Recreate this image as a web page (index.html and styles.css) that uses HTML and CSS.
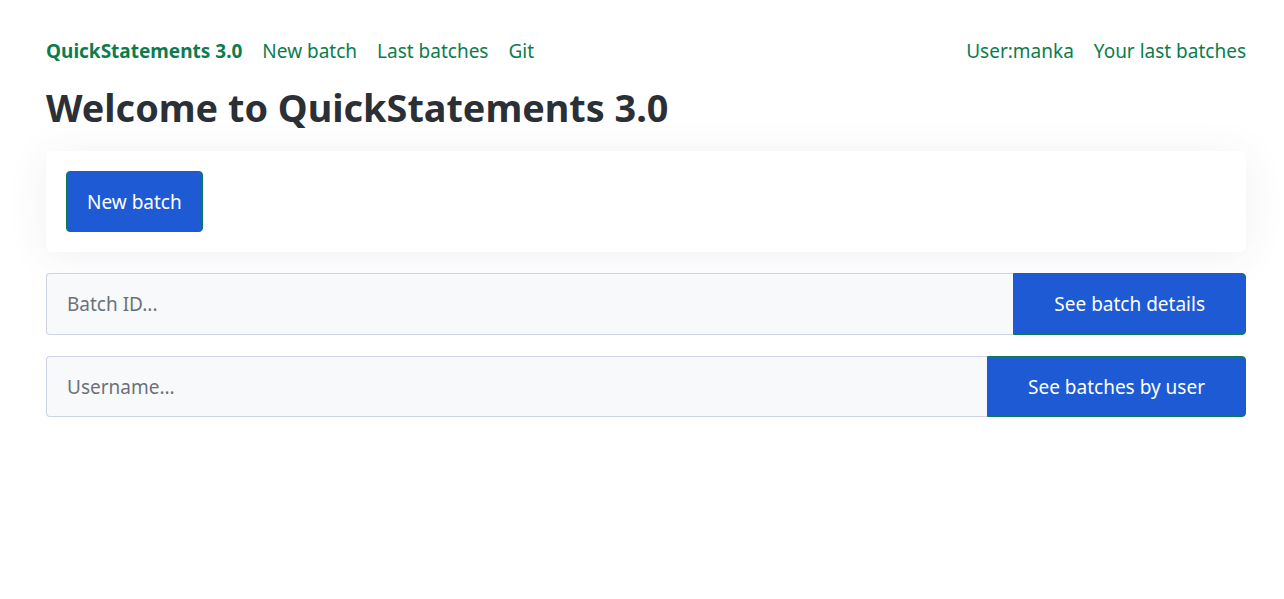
FILE: index.html
```html
<!DOCTYPE html>
<html lang="en">
<head>
<meta charset="utf-8">
<title>QuickStatements 3.0</title>
<link rel="stylesheet" href="styles.css">
</head>
<body>
<div class="page">
  <nav class="nav">
    <div class="nav-left">
      <a class="brand" href="#">QuickStatements 3.0</a>
      <a class="nav-link" href="#">New batch</a>
      <a class="nav-link" href="#">Last batches</a>
      <a class="nav-link" href="#">Git</a>
    </div>
    <div class="nav-right">
      <a class="nav-link" href="#">User:manka</a>
      <a class="nav-link" href="#">Your last batches</a>
    </div>
  </nav>
  <h1 class="title">Welcome to QuickStatements 3.0</h1>
  <div class="card">
    <button class="btn btn-new">New batch</button>
  </div>
  <div class="input-group">
    <input class="field" type="text" placeholder="Batch ID...">
    <button class="btn btn-side">See batch details</button>
  </div>
  <div class="input-group">
    <input class="field" type="text" placeholder="Username...">
    <button class="btn btn-side">See batches by user</button>
  </div>
</div>
</body>
</html>
```

FILE: styles.css
```css
* { box-sizing: border-box; }
html, body { margin: 0; padding: 0; background: #fff; }
body {
  font-family: "Noto Sans", "Open Sans", sans-serif;
  font-size: 19px;
  color: #2b2f36;
}
.page {
  padding: 36px 38px 0 46px;
}
.nav {
  display: flex;
  justify-content: space-between;
  align-items: center;
  height: 30px;
}
.nav-left, .nav-right {
  display: flex;
  align-items: center;
  gap: 20px;
}
.nav a { text-decoration: none; color: #0b7c4e; }
.brand { font-weight: 700; }
.title {
  margin: 15px 0 0;
  font-size: 37.8px;
  font-weight: 700;
  line-height: 54px;
  color: #2b2f36;
}
.card {
  margin-top: 16px;
  background: #fff;
  border-radius: 6px;
  padding: 20px;
  box-shadow: 0 4px 40px rgba(60, 70, 120, 0.08);
  height: 101px;
}
.btn {
  font: inherit;
  color: #fff;
  background: #1e5ad3;
  border: 1px solid #0b7c4e;
  border-radius: 4px;
  cursor: pointer;
}
.btn-new {
  height: 61px;
  padding: 0 20px;
}
.input-group {
  display: flex;
  height: 62px;
  margin-top: 21px;
}
.input-group + .input-group { margin-top: 21px; height: 61px; }
.field {
  flex: 1;
  min-width: 0;
  font: inherit;
  color: #2b2f36;
  background: #f8f9fa;
  border: 1px solid #cdd3e1;
  border-right: none;
  border-radius: 4px 0 0 4px;
  padding: 0 20px;
  outline: none;
}
.field::placeholder { color: #6b717a; }
.btn-side {
  border-radius: 0 4px 4px 0;
  padding: 0 40px;
}
```
